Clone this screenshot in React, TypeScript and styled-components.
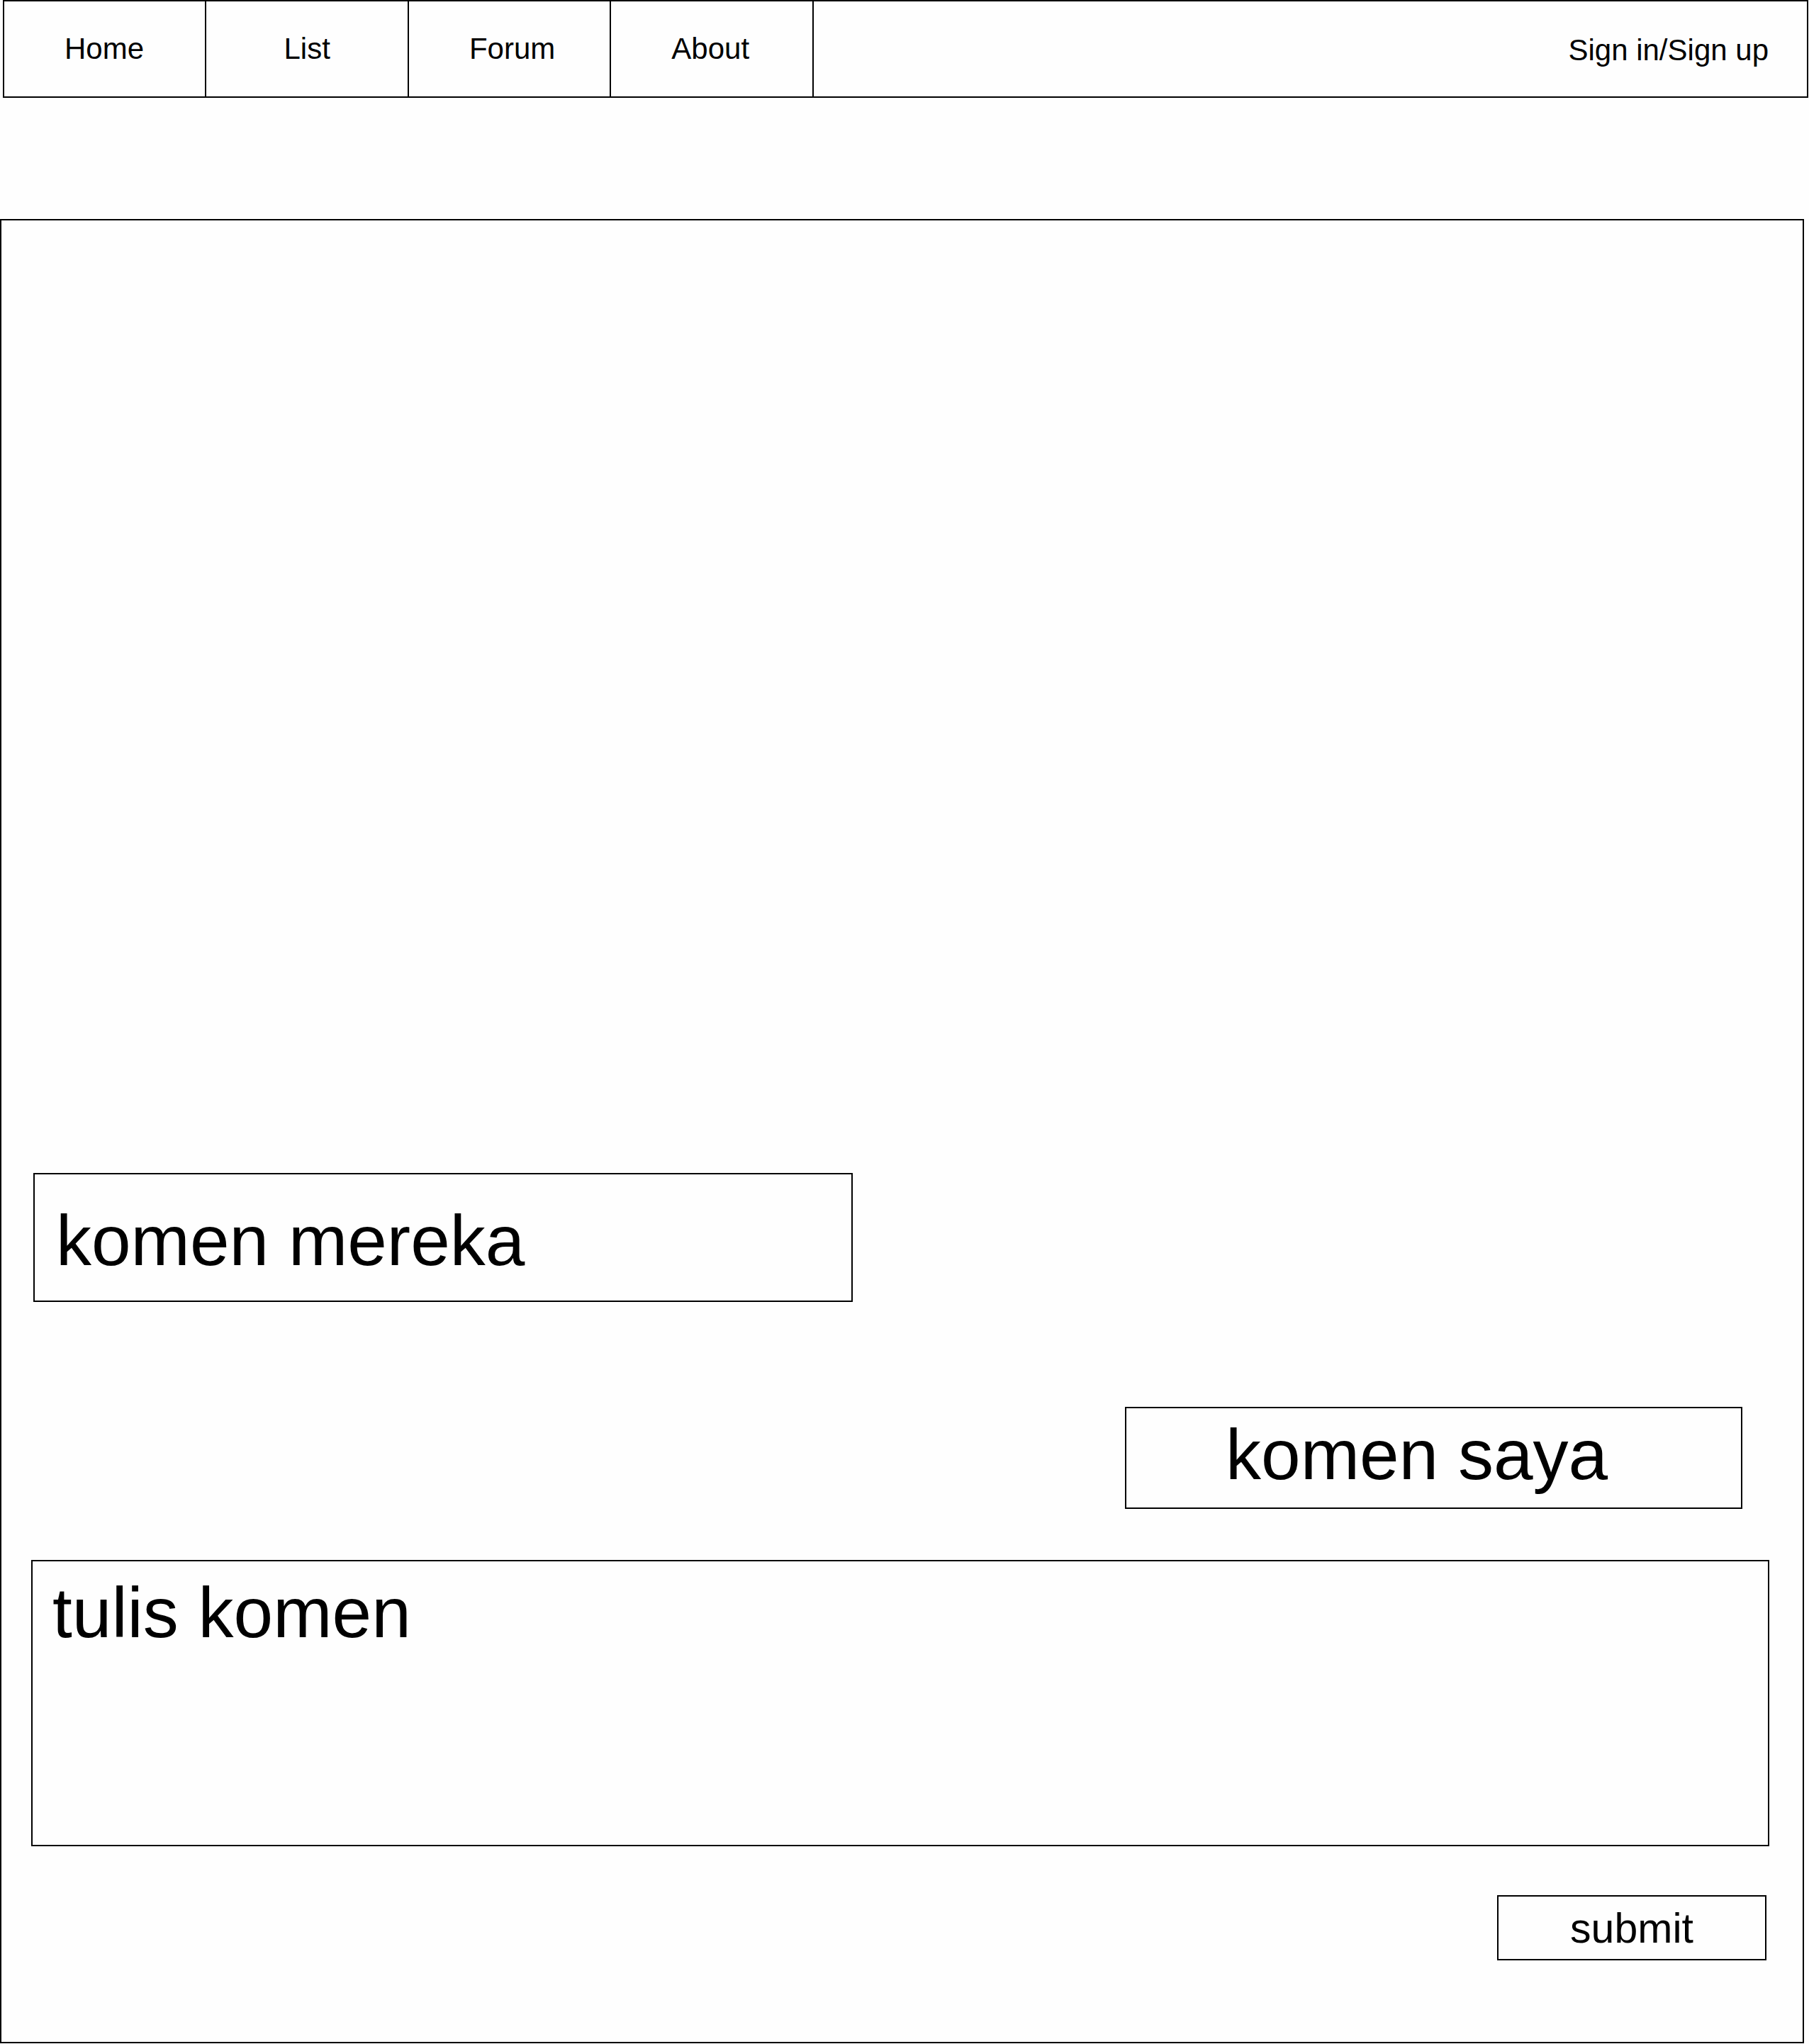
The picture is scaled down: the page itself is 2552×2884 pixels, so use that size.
import React from "react";
import styled, { createGlobalStyle } from "styled-components";

const LINE = "2px solid #000";

const GlobalStyle = createGlobalStyle`
  *, *::before, *::after { box-sizing: border-box; }
  body {
    margin: 0;
    background: #fefefe;
    color: #000;
    font-family: "Liberation Sans", Arial, Helvetica, sans-serif;
  }
`;

const Page = styled.div`
  display: flex;
  flex-direction: column;
  min-height: 100vh;
  padding-bottom: 1px;
`;

const Header = styled.header`
  display: flex;
  justify-content: space-between;
  margin: 0 1px 0 4px;
  border: ${LINE};
  font-size: 42px;
  line-height: 48px;
`;

const Nav = styled.nav`
  display: grid;
  grid-template-columns: repeat(4, 1fr);
  width: 44.9%;
`;

const NavLink = styled.a<{ $centered?: boolean }>`
  padding: 43px 0 43px ${(p) => (p.$centered ? "0" : "85px")};
  border-right: ${LINE};
  color: inherit;
  text-align: ${(p) => (p.$centered ? "center" : "left")};
  text-decoration: none;
`;

const SignLink = styled.a`
  padding: 45px 54px 41px 0;
  color: inherit;
  text-decoration: none;
`;

const Thread = styled.main`
  display: flex;
  flex: 1;
  flex-direction: column;
  justify-content: flex-end;
  margin: 171px 7px 0 0;
  padding: 72px 47px 115px 42px;
  border: ${LINE};
`;

const Comment = styled.p<{ $mine?: boolean }>`
  align-self: ${(p) => (p.$mine ? "flex-end" : "flex-start")};
  width: ${(p) => (p.$mine ? "35.52%" : "47.15%")};
  margin: ${(p) => (p.$mine ? "0 38px 72px 0" : "0 0 148px 3px")};
  padding: ${(p) => (p.$mine ? "7px 0 17px 140px" : "35px 0 27px 30px")};
  border: ${LINE};
  font-size: 100px;
  line-height: 116px;
`;

const Form = styled.form`
  display: flex;
  flex-direction: column;
  gap: 69px;
`;

const CommentBox = styled.textarea`
  display: block;
  width: 100%;
  height: 404px;
  margin: 0;
  padding: 14px 28px;
  border: ${LINE};
  border-radius: 0;
  outline: none;
  background: transparent;
  color: inherit;
  font: inherit;
  font-size: 100px;
  line-height: 116px;
  resize: none;

  &::placeholder {
    color: #000;
    opacity: 1;
  }
`;

const SubmitButton = styled.button`
  align-self: flex-end;
  width: 380px;
  margin: 0 4px 0 0;
  padding: 11px 0 9px;
  border: ${LINE};
  border-radius: 0;
  background: transparent;
  color: inherit;
  font: inherit;
  font-size: 59px;
  line-height: 68px;
  cursor: pointer;
`;

const links = [
  { label: "Home" },
  { label: "List", centered: true },
  { label: "Forum" },
  { label: "About" },
];

export default function App() {
  return (
    <>
      <GlobalStyle />
      <Page>
        <Header>
          <Nav>
            {links.map((link) => (
              <NavLink key={link.label} href="#" $centered={link.centered}>
                {link.label}
              </NavLink>
            ))}
          </Nav>
          <SignLink href="#">Sign in/Sign up</SignLink>
        </Header>
        <Thread>
          <Comment>komen mereka</Comment>
          <Comment $mine>komen saya</Comment>
          <Form onSubmit={(e) => e.preventDefault()}>
            <CommentBox aria-label="tulis komen" placeholder="tulis komen" />
            <SubmitButton type="submit">submit</SubmitButton>
          </Form>
        </Thread>
      </Page>
    </>
  );
}
